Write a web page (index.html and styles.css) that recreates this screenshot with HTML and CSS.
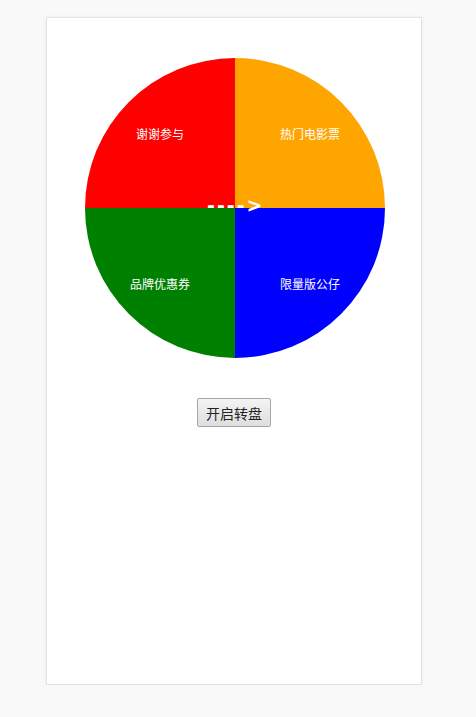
FILE: index.html
```html
<!DOCTYPE html>
<html>
<head>
    <meta charset="utf-8">
    <title>幸运转盘</title>
    <link rel="stylesheet" href="styles.css">
</head>
<body>
    <div class="box">
        <div class="wheel">
            <div class="part part-red"><span>谢谢参与</span></div>
            <div class="part part-orange"><span>热门电影票</span></div>
            <div class="part part-green"><span>品牌优惠券</span></div>
            <div class="part part-blue"><span>限量版公仔</span></div>
            <div class="pointer">----&gt;</div>
        </div>
        <div class="actions">
            <button class="start">开启转盘</button>
        </div>
    </div>
</body>
</html>
```

FILE: styles.css
```css
body {
    margin: 0;
    padding: 0;
    background-color: #f9f9f9;
    font-family: "Liberation Sans", "Noto Sans CJK SC", sans-serif;
}

.box {
    width: 374px;
    height: 626px;
    margin: 17px 0 0 46px;
    padding-top: 40px;
    background-color: #fff;
    border: 1px solid #e2e2e2;
    box-shadow: 0 0 4px rgba(0, 0, 0, 0.06);
}

/* four quarters of the wheel */
.wheel {
    position: relative;
    width: 300px;
    height: 300px;
    margin-left: 38px;
    border-radius: 50%;
    overflow: hidden;
    display: grid;
    grid-template-columns: 150px 150px;
    grid-template-rows: 150px 150px;
}

.part {
    display: flex;
    justify-content: center;
    align-items: center;
    color: #fff;
    font-size: 12px;
}

.part-red { background-color: red; }
.part-orange { background-color: orange; }
.part-green { background-color: green; }
.part-blue { background-color: blue; }

.pointer {
    position: absolute;
    left: 122px;
    top: 135px;
    color: #fff;
    font-family: "DejaVu Sans", sans-serif;
    font-size: 19px;
    font-weight: bold;
    letter-spacing: 2px;
    line-height: 24px;
}

.actions {
    text-align: center;
    margin-top: 40px;
}

.start {
    width: 74px;
    height: 29px;
    padding: 0;
    font-size: 14px;
    font-family: "Noto Sans CJK SC", sans-serif;
    color: #222;
    background: linear-gradient(#f4f4f4, #dedede);
    border: 1px solid #a6a6a6;
    border-radius: 2px;
    cursor: pointer;
}
```
